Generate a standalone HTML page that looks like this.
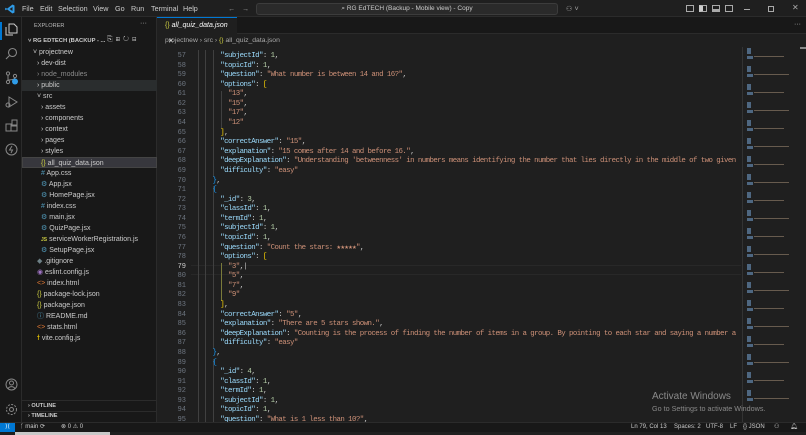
<!DOCTYPE html>
<html><head><meta charset="utf-8"><style>
*{margin:0;padding:0;box-sizing:border-box}
body{width:806px;height:435px;overflow:hidden;background:#1f1f1f;font-family:"Liberation Sans",sans-serif;color:#ccc;position:relative}
.abs{position:absolute}
#title{left:0;top:0;width:806px;height:17px;background:#1f1f1f;border-bottom:1px solid #2b2b2b}
.menu{top:4px;font-size:7.2px;color:#ccc}
#act{left:0;top:17px;width:22px;height:405px;background:#181818;border-right:1px solid #2b2b2b}
#side{left:22px;top:17px;width:135px;height:405px;background:#181818;border-right:1px solid #2b2b2b}
.row{position:absolute;left:0;width:135px;height:11px;font-size:7px;line-height:11px;color:#ccc;white-space:nowrap}
#editor{left:157px;top:17px;width:649px;height:405px;background:#1f1f1f}
#code{position:absolute;left:197px;top:52px;font-family:"Liberation Mono",monospace;font-size:7.4px;letter-spacing:-0.56px;line-height:9.58px;white-space:pre;color:#ccc}
#ln{position:absolute;left:160px;width:26px;top:52px;font-family:"Liberation Mono",monospace;font-size:7px;line-height:9.58px;text-align:right;color:#6e7681;white-space:pre}
.k{color:#9cdcfe}.s{color:#ce9178}.n{color:#b5cea8}.y{color:#ffd700}.b{color:#179fff}
#status{left:0;top:422px;width:806px;height:10px;background:#181818;border-top:1px solid #2b2b2b;font-size:6px;line-height:9px;color:#ccc}
</style></head><body>
<div id="title" class="abs">
 <svg class="abs" style="left:5px;top:4px" width="10" height="10" viewBox="0 0 10 10"><path d="M7.5 0.5L9.5 1.5V8.5L7.5 9.5L2 5.2L0.8 6.2L0.2 5.8V4.2L0.8 3.8L2 4.8L7.5 0.5ZM7.5 3L4.5 5L7.5 7Z" fill="#2f9ce8"/></svg>
 <span class="abs menu" style="left:22px">File</span>
 <span class="abs menu" style="left:40px">Edit</span>
 <span class="abs menu" style="left:58px">Selection</span>
 <span class="abs menu" style="left:93px">View</span>
 <span class="abs menu" style="left:115px">Go</span>
 <span class="abs menu" style="left:131px">Run</span>
 <span class="abs menu" style="left:151px">Terminal</span>
 <span class="abs menu" style="left:183px">Help</span>
 <span class="abs menu" style="left:228px;color:#888">←</span><span class="abs menu" style="left:242px;color:#888">→</span>
 <div class="abs" style="left:256px;top:3px;width:302px;height:12px;background:#2a2a2a;border:1px solid #3c3c3c;border-radius:3px;font-size:6.5px;line-height:10px;text-align:center;color:#ccc">⌕ RG EdTECH (Backup - Mobile view) - Copy</div>
 <span class="abs menu" style="left:566px;color:#aaa">⚇ ˅</span>
 <div class="abs" style="left:686px;top:5px;width:8px;height:7px;border:1px solid #aaa"></div>
 <div class="abs" style="left:699px;top:5px;width:8px;height:7px;border:1px solid #aaa;border-left:4px solid #ccc"></div>
 <div class="abs" style="left:712px;top:5px;width:8px;height:7px;border:1px solid #aaa;border-bottom:3px solid #aaa"></div>
 <div class="abs" style="left:725px;top:5px;width:8px;height:7px;border:1px solid #aaa"></div>
 <div class="abs" style="left:744px;top:9px;width:6px;height:1px;background:#aaa"></div>
 <div class="abs" style="left:768px;top:6px;width:6px;height:6px;border:1px solid #aaa"></div>
 <span class="abs" style="left:792px;top:3px;font-size:8px;color:#aaa">✕</span>
</div>
<div id="act" class="abs">
 <div class="abs" style="left:0;top:5px;width:2px;height:18px;background:#0078d4"></div>
 <svg class="abs" style="left:5px;top:6px" width="13" height="13" viewBox="0 0 13 13" fill="none" stroke="#ccc" stroke-width="1"><path d="M4 1h5l3 3v6H4z M1 4v8h7"/></svg>
 <svg class="abs" style="left:5px;top:30px" width="13" height="13" viewBox="0 0 13 13" fill="none" stroke="#888" stroke-width="1.1"><circle cx="7.5" cy="5.5" r="4"/><path d="M4.5 8.5L1 12"/></svg>
 <svg class="abs" style="left:5px;top:54px" width="14" height="14" viewBox="0 0 14 14" fill="none" stroke="#888" stroke-width="1"><circle cx="3" cy="2.5" r="1.6"/><circle cx="3" cy="11" r="1.6"/><circle cx="10" cy="5" r="1.6"/><path d="M3 4v5M10 6.5c0 3-7 2-7 3"/><circle cx="10" cy="10.5" r="3" fill="#2f9ce8" stroke="none"/></svg>
 <svg class="abs" style="left:5px;top:78px" width="13" height="13" viewBox="0 0 13 13" fill="none" stroke="#888" stroke-width="1"><path d="M4 2l8 5-8 5z"/><circle cx="3" cy="10" r="2"/></svg>
 <svg class="abs" style="left:5px;top:102px" width="13" height="13" viewBox="0 0 13 13" fill="none" stroke="#888" stroke-width="1"><path d="M1 5h5v7H1zM6 7h6v5H6zM7 1h5v5H7z"/></svg>
 <svg class="abs" style="left:5px;top:126px" width="13" height="13" viewBox="0 0 13 13" fill="none" stroke="#888" stroke-width="1"><circle cx="6.5" cy="6.5" r="5.5"/><path d="M7 3L4.5 7h3L6 10" /></svg>
 <svg class="abs" style="left:5px;top:361px" width="13" height="13" viewBox="0 0 13 13" fill="none" stroke="#888" stroke-width="1"><circle cx="6.5" cy="6.5" r="5.5"/><circle cx="6.5" cy="5" r="2"/><path d="M3 10.5c2-2.5 5-2.5 7 0"/></svg>
 <svg class="abs" style="left:5px;top:386px" width="13" height="13" viewBox="0 0 13 13" fill="none" stroke="#888" stroke-width="1"><circle cx="6.5" cy="6.5" r="2"/><circle cx="6.5" cy="6.5" r="5" stroke-dasharray="2 1.3"/></svg>
</div>
<div id="side" class="abs">
 <span class="abs" style="left:12px;top:6px;font-size:5.6px;color:#bbb">EXPLORER</span>
 <span class="abs" style="left:118px;top:3px;font-size:7px;color:#bbb">···</span>
 <div class="row" style="top:19px;left:6px;font-size:5.8px;font-weight:bold">˅ RG EDTECH (BACKUP - ...</div>
 <span class="abs" style="left:85px;top:19px;font-size:7px;color:#bbb;letter-spacing:3px">⎘⊞↻⊟</span>
 <div class="row" style="top:30px;padding-left:11px">˅ projectnew</div>
 <div class="row" style="top:41px;padding-left:15px">› dev-dist</div>
 <div class="row" style="top:52px;padding-left:15px;color:#8b8b8b">› node_modules</div>
 <div class="row" style="top:63px;padding-left:15px;background:#2a2d2e">› public</div>
 <div class="row" style="top:74px;padding-left:15px">˅ src</div>
 <div class="row" style="top:85px;padding-left:19px">› assets</div>
 <div class="row" style="top:96px;padding-left:19px">› components</div>
 <div class="row" style="top:107px;padding-left:19px">› context</div>
 <div class="row" style="top:118px;padding-left:19px">› pages</div>
 <div class="row" style="top:129px;padding-left:19px">› styles</div>
 <div class="row" style="top:140px;padding-left:18px;background:#37373d;border:1px solid #444"><span style="color:#cbcb41">{}</span> all_quiz_data.json</div>
 <div class="row" style="top:151px;padding-left:19px"><span style="color:#519aba">#</span> App.css</div>
 <div class="row" style="top:162px;padding-left:19px"><span style="color:#519aba">⚙</span> App.jsx</div>
 <div class="row" style="top:173px;padding-left:19px"><span style="color:#519aba">⚙</span> HomePage.jsx</div>
 <div class="row" style="top:184px;padding-left:19px"><span style="color:#519aba">#</span> index.css</div>
 <div class="row" style="top:195px;padding-left:19px"><span style="color:#519aba">⚙</span> main.jsx</div>
 <div class="row" style="top:206px;padding-left:19px"><span style="color:#519aba">⚙</span> QuizPage.jsx</div>
 <div class="row" style="top:217px;padding-left:19px"><span style="color:#cbcb41;font-size:5px;font-weight:bold">JS</span> serviceWorkerRegistration.js</div>
 <div class="row" style="top:228px;padding-left:19px"><span style="color:#519aba">⚙</span> SetupPage.jsx</div>
 <div class="row" style="top:239px;padding-left:15px"><span style="color:#6d8086">◆</span> .gitignore</div>
 <div class="row" style="top:250px;padding-left:15px"><span style="color:#a074c4">◉</span> eslint.config.js</div>
 <div class="row" style="top:261px;padding-left:15px"><span style="color:#e37933">&lt;&gt;</span> index.html</div>
 <div class="row" style="top:272px;padding-left:15px"><span style="color:#cbcb41">{}</span> package-lock.json</div>
 <div class="row" style="top:283px;padding-left:15px"><span style="color:#cbcb41">{}</span> package.json</div>
 <div class="row" style="top:294px;padding-left:15px"><span style="color:#519aba">ⓘ</span> README.md</div>
 <div class="row" style="top:305px;padding-left:15px"><span style="color:#e37933">&lt;&gt;</span> stats.html</div>
 <div class="row" style="top:316px;padding-left:15px"><span style="color:#ffd700">ϯ</span> vite.config.js</div>
 <div class="abs" style="left:0;top:383px;width:134px;height:1px;background:#2b2b2b"></div>
 <div class="row" style="top:384px;padding-left:6px;font-size:5.6px;font-weight:bold">› OUTLINE</div>
 <div class="abs" style="left:0;top:394px;width:134px;height:1px;background:#2b2b2b"></div>
 <div class="row" style="top:394px;padding-left:6px;font-size:5.6px;font-weight:bold">› TIMELINE</div>
</div>
<div id="editor" class="abs">
 <div class="abs" style="left:0;top:0;width:649px;height:17px;background:#181818;border-bottom:1px solid #2b2b2b"></div>
 <div class="abs" style="left:0;top:0;width:80px;height:17px;background:#1f1f1f;border-top:1px solid #0078d4;font-size:7px;line-height:16px;padding-left:8px;font-style:italic;color:#fff"><span style="color:#cbcb41;font-style:normal">{}</span> all_quiz_data.json <span style="font-style:normal;margin-left:3px">✕</span></div>
 <span class="abs" style="left:637px;top:4px;font-size:7px;color:#bbb">···</span>
 <div class="abs" style="left:8px;top:20px;font-size:6.8px;color:#aaa">projectnew › src › <span style="color:#cbcb41">{}</span> all_quiz_data.json</div>
</div>
<div id="ln">57
58
59
60
61
62
63
64
65
66
67
68
69
70
71
72
73
74
75
76
77
78
<span style="color:#ccc">79</span>
80
81
82
83
84
85
86
87
88
89
90
91
92
93
94
95</div>
<div class="abs" style="left:191px;top:265px;width:550px;height:10px;border-top:1px solid #282828;border-bottom:1px solid #282828"></div>
<div class="abs" style="left:198px;top:50px;width:1px;height:372px;background:#404040"></div>
<div class="abs" style="left:205px;top:50px;width:1px;height:372px;background:#404040"></div>
<div class="abs" style="left:213px;top:50px;width:1px;height:127px;background:#404040"></div>
<div class="abs" style="left:213px;top:186px;width:1px;height:163px;background:#404040"></div>
<div class="abs" style="left:213px;top:359px;width:1px;height:63px;background:#404040"></div>
<div class="abs" style="left:221px;top:91px;width:1px;height:38px;background:#404040"></div>
<div class="abs" style="left:221px;top:263px;width:1px;height:38px;background:#7a7a3a"></div>
<div id="code">      <span class="k">"subjectId"</span>: <span class="n">1</span>,
      <span class="k">"topicId"</span>: <span class="n">1</span>,
      <span class="k">"question"</span>: <span class="s">"What number is between 14 and 16?"</span>,
      <span class="k">"options"</span>: <span class="y">[</span>
        <span class="s">"13"</span>,
        <span class="s">"15"</span>,
        <span class="s">"17"</span>,
        <span class="s">"12"</span>
      <span class="y">]</span>,
      <span class="k">"correctAnswer"</span>: <span class="s">"15"</span>,
      <span class="k">"explanation"</span>: <span class="s">"15 comes after 14 and before 16."</span>,
      <span class="k">"deepExplanation"</span>: <span class="s">"Understanding 'betweenness' in numbers means identifying the number that lies directly in the middle of two given</span>
      <span class="k">"difficulty"</span>: <span class="s">"easy"</span>
    <span class="b">}</span>,
    <span class="b">{</span>
      <span class="k">"_id"</span>: <span class="n">3</span>,
      <span class="k">"classId"</span>: <span class="n">1</span>,
      <span class="k">"termId"</span>: <span class="n">1</span>,
      <span class="k">"subjectId"</span>: <span class="n">1</span>,
      <span class="k">"topicId"</span>: <span class="n">1</span>,
      <span class="k">"question"</span>: <span class="s">"Count the stars: ★★★★★"</span>,
      <span class="k">"options"</span>: <span class="y">[</span>
        <span class="s">"3"</span>,|
        <span class="s">"5"</span>,
        <span class="s">"7"</span>,
        <span class="s">"9"</span>
      <span class="y">]</span>,
      <span class="k">"correctAnswer"</span>: <span class="s">"5"</span>,
      <span class="k">"explanation"</span>: <span class="s">"There are 5 stars shown."</span>,
      <span class="k">"deepExplanation"</span>: <span class="s">"Counting is the process of finding the number of items in a group. By pointing to each star and saying a number a</span>
      <span class="k">"difficulty"</span>: <span class="s">"easy"</span>
    <span class="b">}</span>,
    <span class="b">{</span>
      <span class="k">"_id"</span>: <span class="n">4</span>,
      <span class="k">"classId"</span>: <span class="n">1</span>,
      <span class="k">"termId"</span>: <span class="n">1</span>,
      <span class="k">"subjectId"</span>: <span class="n">1</span>,
      <span class="k">"topicId"</span>: <span class="n">1</span>,
      <span class="k">"question"</span>: <span class="s">"What is 1 less than 10?"</span>,</div>
<div class="abs" style="left:742px;top:47px;width:1px;height:375px;background:#333"></div>
<svg class="abs" style="left:745px;top:46px" width="55" height="376" viewBox="0 0 55 376">
 <g fill="#5a7a9a" opacity="0.8">
  <rect x="2" y="2" width="4" height="6"/><rect x="2" y="10" width="6" height="3"/><rect x="9" y="10" width="30" height="1" fill="#7a6a5a"/>
  <rect x="2" y="20" width="4" height="6"/><rect x="2" y="28" width="6" height="3"/><rect x="9" y="28" width="35" height="1" fill="#7a6a5a"/>
  <rect x="2" y="38" width="4" height="6"/><rect x="2" y="46" width="6" height="3"/><rect x="9" y="46" width="30" height="1" fill="#7a6a5a"/>
  <rect x="2" y="56" width="4" height="6"/><rect x="2" y="64" width="6" height="3"/><rect x="9" y="64" width="35" height="1" fill="#7a6a5a"/>
  <rect x="2" y="74" width="4" height="6"/><rect x="2" y="82" width="6" height="3"/><rect x="9" y="82" width="30" height="1" fill="#7a6a5a"/>
  <rect x="2" y="92" width="4" height="6"/><rect x="2" y="100" width="6" height="3"/><rect x="9" y="100" width="35" height="1" fill="#7a6a5a"/>
  <rect x="2" y="110" width="4" height="6"/><rect x="2" y="118" width="6" height="3"/><rect x="9" y="118" width="30" height="1" fill="#7a6a5a"/>
  <rect x="2" y="128" width="4" height="6"/><rect x="2" y="136" width="6" height="3"/><rect x="9" y="136" width="35" height="1" fill="#7a6a5a"/>
  <rect x="2" y="146" width="4" height="6"/><rect x="2" y="154" width="6" height="3"/><rect x="9" y="154" width="30" height="1" fill="#7a6a5a"/>
  <rect x="2" y="164" width="4" height="6"/><rect x="2" y="172" width="6" height="3"/><rect x="9" y="172" width="35" height="1" fill="#7a6a5a"/>
  <rect x="2" y="182" width="4" height="6"/><rect x="2" y="190" width="6" height="3"/><rect x="9" y="190" width="30" height="1" fill="#7a6a5a"/>
  <rect x="2" y="200" width="4" height="6"/><rect x="2" y="208" width="6" height="3"/><rect x="9" y="208" width="35" height="1" fill="#7a6a5a"/>
  <rect x="2" y="218" width="4" height="6"/><rect x="2" y="226" width="6" height="3"/><rect x="9" y="226" width="30" height="1" fill="#7a6a5a"/>
  <rect x="2" y="236" width="4" height="6"/><rect x="2" y="244" width="6" height="3"/><rect x="9" y="244" width="35" height="1" fill="#7a6a5a"/>
  <rect x="2" y="254" width="4" height="6"/><rect x="2" y="262" width="6" height="3"/><rect x="9" y="262" width="30" height="1" fill="#7a6a5a"/>
  <rect x="2" y="272" width="4" height="6"/><rect x="2" y="280" width="6" height="3"/><rect x="9" y="280" width="35" height="1" fill="#7a6a5a"/>
  <rect x="2" y="290" width="4" height="6"/><rect x="2" y="298" width="6" height="3"/><rect x="9" y="298" width="30" height="1" fill="#7a6a5a"/>
  <rect x="2" y="308" width="4" height="6"/><rect x="2" y="316" width="6" height="3"/><rect x="9" y="316" width="35" height="1" fill="#7a6a5a"/>
  <rect x="2" y="326" width="4" height="6"/><rect x="2" y="334" width="6" height="3"/><rect x="9" y="334" width="30" height="1" fill="#7a6a5a"/>
  <rect x="2" y="344" width="4" height="6"/><rect x="2" y="352" width="6" height="3"/><rect x="9" y="352" width="35" height="1" fill="#7a6a5a"/>
 </g>
</svg>
<div class="abs" style="left:800px;top:47px;width:6px;height:2px;background:#888"></div>
<div class="abs" style="left:652px;top:391px;font-size:10px;color:#8a8a8a">Activate Windows</div>
<div class="abs" style="left:652px;top:404px;font-size:7.2px;color:#8a8a8a">Go to Settings to activate Windows.</div>
<div id="status" class="abs">
 <div class="abs" style="left:0;top:0;width:15px;height:10px;background:#0078d4;color:#fff;text-align:center">⟩⟨</div>
 <span class="abs" style="left:20px">ᚴ main ⟳</span>
 <span class="abs" style="left:61px">⊗ 0 ⚠ 0</span>
 <span class="abs" style="left:631px">Ln 79, Col 13</span>
 <span class="abs" style="left:674px">Spaces: 2</span>
 <span class="abs" style="left:706px">UTF-8</span>
 <span class="abs" style="left:730px">LF</span>
 <span class="abs" style="left:743px">{} JSON</span>
 <span class="abs" style="left:774px">⚇</span>
 <span class="abs" style="left:790px">🔔︎</span>
</div>
<div class="abs" style="left:0;top:432px;width:806px;height:3px;background:#202020"></div>
<div class="abs" style="left:15px;top:432px;width:95px;height:3px;background:#c8c8c8"></div>
</body></html>
